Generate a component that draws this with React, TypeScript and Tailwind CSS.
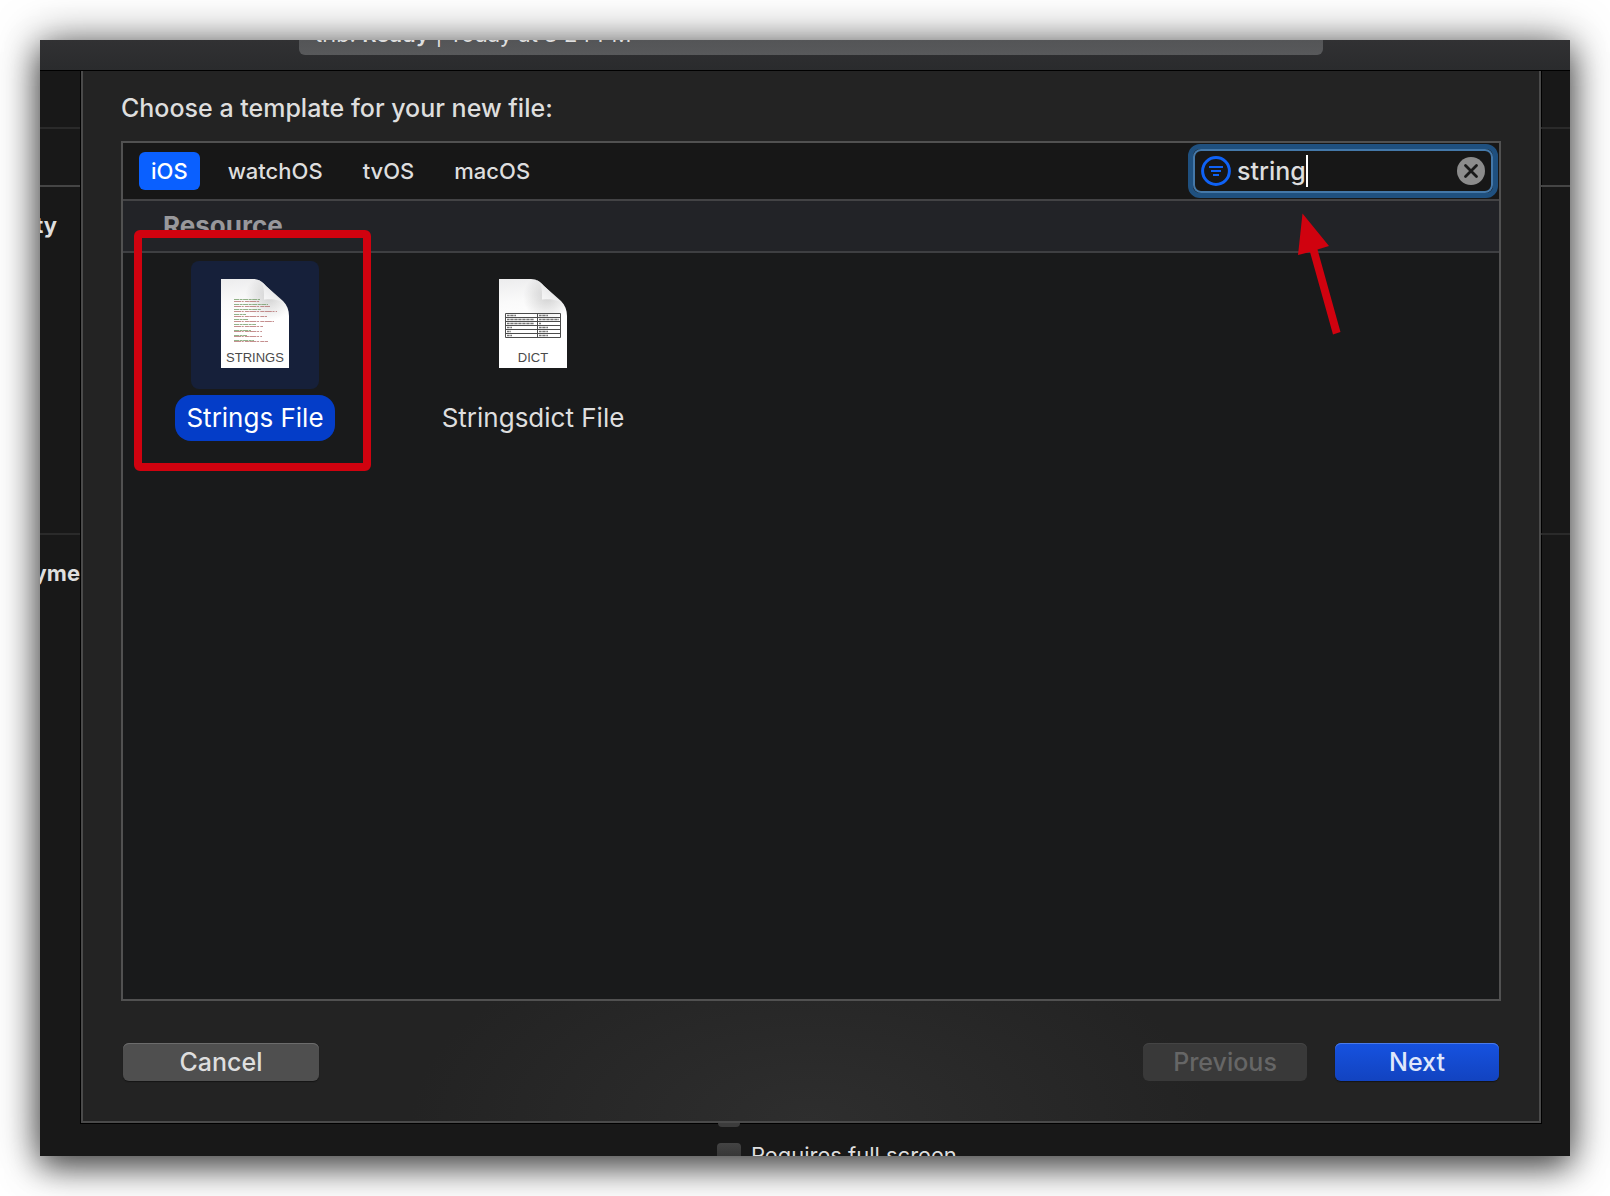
import React from "react";

const tabs = ["iOS", "watchOS", "tvOS", "macOS"];

function Page({ id, label, children }: { id: string; label: string; children: React.ReactNode }) {
  return (
    <svg width="68" height="92" viewBox="0 0 68 92" className="overflow-visible" aria-hidden="true">
      <defs>
        <linearGradient id={`${id}-paper`} x1="0.2" y1="0" x2="0.3" y2="1">
          <stop offset="0" stopColor="#ededee" />
          <stop offset="0.25" stopColor="#fafafa" />
          <stop offset="0.5" stopColor="#ffffff" />
        </linearGradient>
        <linearGradient id={`${id}-fold`} x1="0" y1="1" x2="0.6" y2="0.3">
          <stop offset="0" stopColor="#ffffff" />
          <stop offset="1" stopColor="#e6e6e7" />
        </linearGradient>
        <radialGradient id={`${id}-shade`} cx="48" cy="18" r="24" gradientUnits="userSpaceOnUse">
          <stop offset="0" stopColor="#000" stopOpacity="0.16" />
          <stop offset="1" stopColor="#000" stopOpacity="0" />
        </radialGradient>
      </defs>
      <path d="M0 0H32C38 0 41 3 45 7L62 22C66 26 68 31 68 37V89H0Z" fill={`url(#${id}-paper)`} />
      <path d="M0 0H32C38 0 41 3 45 7L62 22C66 26 68 31 68 37V89H0Z" fill={`url(#${id}-shade)`} />
      <path d="M36 0.5C42 3 43.5 8 43 20.5C52 19.5 59 20.5 65 26L45 7C42 4 40 1.5 36 0.5Z" fill={`url(#${id}-fold)`} />
      {children}
      <text x="34" y="83" textAnchor="middle" fontFamily="Liberation Sans, sans-serif" fontSize="13" fill="#4a4a4a">
        {label}
      </text>
    </svg>
  );
}

const codeLines: [number, string, number][] = [
  [20, "g", 26], [22, "r", 26], [25, "g", 34], [27, "r", 36], [30, "g", 27], [32, "r", 43],
  [35, "g", 12], [37, "r", 33], [40, "g", 14], [42, "r", 40], [45, "g", 22], [47, "r", 29],
  [51, "g", 17], [52, "r", 28], [56, "g", 13], [57, "r", 28], [61, "g", 20], [62, "r", 34],
];

function StringsIcon() {
  return (
    <Page id="strings" label="STRINGS">
      {codeLines.map(([y, tone, w], i) => (
        <path
          key={i}
          d={`M13 ${y + 0.5}h${w}`}
          stroke={tone === "g" ? "#6f9a63" : "#b26a6a"}
          strokeWidth="1"
          strokeDasharray={tone === "g" ? "5 0.6 3 0.5" : "7 0.7 2 1.2 4 0.5"}
          opacity="0.75"
        />
      ))}
    </Page>
  );
}

const dictRows = [[9, 9], [27, 20], [27, 2], [5, 9], [4, 9], [5, 9]];

function DictIcon() {
  return (
    <Page id="dict" label="DICT">
      <path
        d="M6.5 34.5H61.5V58.5H6.5ZM38.5 34.5V58.5M6.5 38.5H61.5M6.5 42.5H61.5M6.5 46.5H61.5M6.5 50.5H61.5M6.5 54.5H61.5"
        fill="none"
        stroke="#4c4c4c"
        strokeWidth="1"
      />
      {dictRows.map(([a, b], i) => (
        <path key={i} d={`M8 ${36.5 + i * 4}h${a}M40 ${36.5 + i * 4}h${b}`} stroke="#777" strokeWidth="1.4" strokeDasharray="2 0.4 1.3 0.3" />
      ))}
    </Page>
  );
}

function SideLines() {
  return (
    <>
      <div className="h-14 shrink-0" />
      <div className="h-0.5 shrink-0 bg-[#2a2a2a]" />
      <div className="h-14 shrink-0" />
      <div className="h-0.5 shrink-0 bg-[#454545]" />
    </>
  );
}

export default function App() {
  return (
    <div className="flex min-h-screen bg-white p-10 font-[Inter,sans-serif] text-[#dedede]">
      <div className="flex min-w-0 flex-1 flex-col bg-[#181818] shadow-[0_0_40px_rgba(0,0,0,0.5),0_12px_30px_rgba(0,0,0,0.55)]">
        <header className="flex h-[31px] shrink-0 justify-center overflow-hidden border-b border-black bg-linear-to-b from-[#313133] to-[#2a2b2d] pl-3">
          <div className="flex h-[15px] w-[1024px] items-end overflow-hidden rounded-b-md bg-linear-to-b from-[#545557] to-[#58595b] px-4 text-[22px] leading-[26px] text-[#dedede]">
            <p className="whitespace-nowrap pb-2">
              trib: <b className="font-semibold">Ready</b> | Today at 3:24 PM
            </p>
          </div>
        </header>

        <div className="flex min-h-0 flex-1">
          <aside className="flex w-[41px] shrink-0 flex-col overflow-hidden text-[22px] font-bold leading-7">
            <SideLines />
            <p className="mt-6 self-end pr-6">ty</p>
            <div className="h-[294px] shrink-0" />
            <div className="h-0.5 shrink-0 bg-[#2a2a2a]" />
            <p className="mt-6 self-end pr-px">yme</p>
          </aside>

          <main className="flex min-w-0 flex-1 flex-col border-2 border-t-0 border-[#4a4a4a] bg-[#232323] bg-[radial-gradient(ellipse_400px_200px_at_50%_100%,#2e2e2e,#232323)] px-[38px] pb-10 outline outline-black">
            <h1 className="mt-5 text-[25px] font-medium leading-[34px]">Choose a template for your new file:</h1>

            <section className="relative mt-4 flex flex-1 flex-col border-2 border-[#515151] bg-[#191a1b]">
              <div className="flex h-[58px] shrink-0 items-center justify-between border-b-2 border-[#434345] bg-[#171717] pl-4 pr-px">
                <nav className="flex items-center gap-4 text-[22px] font-medium leading-[38px]">
                  {tabs.map((t, i) => (
                    <button key={t} className={i === 0 ? "rounded-md bg-[#0a60ff] px-3 text-white" : "px-3"}>
                      {t}
                    </button>
                  ))}
                </nav>
                <div className="flex h-[54px] w-[310px] items-center rounded-xl border-5 border-[#1f507f] bg-[#171717]">
                  <div className="flex h-11 min-w-0 flex-1 items-center rounded-lg border-2 border-[#4478a9] px-1.5">
                    <svg width="30" height="30" viewBox="0 0 30 30" fill="none" stroke="#0f62f6" aria-hidden="true">
                      <circle cx="15" cy="15" r="13.4" strokeWidth="3" />
                      <path d="M8 11H22M10 15H20M12 19H18" strokeWidth="2" />
                    </svg>
                    <input
                      aria-label="Filter"
                      defaultValue="string"
                      className="ml-1.5 min-w-0 max-w-48 bg-transparent text-[25px] font-medium leading-8 caret-transparent outline-none field-sizing-content"
                    />
                    <span className="h-8 w-0.5 shrink-0 bg-white" />
                    <button aria-label="Clear" className="ml-auto">
                      <svg width="28" height="28" viewBox="0 0 28 28" fill="none">
                        <circle cx="14" cy="14" r="14" fill="#8c8c8c" />
                        <path d="M8.5 8.5L19.5 19.5M19.5 8.5L8.5 19.5" stroke="#191919" strokeWidth="2.8" strokeLinecap="round" />
                      </svg>
                    </button>
                  </div>
                </div>
              </div>
              <h2 className="h-[52px] shrink-0 border-b-2 border-[#3e3f42] bg-[#222327] pl-10 text-[26px] font-bold leading-[50px] text-[#98989b]">Resource</h2>

              <div className="flex gap-[98px] px-[42px] pt-2 text-[26px]">
                <button className="flex w-[180px] flex-col items-center gap-1.5">
                  <span className="flex size-32 items-center justify-center rounded-lg bg-[#16203a]"><StringsIcon /></span>
                  <span className="w-40 rounded-2xl bg-[#043dc8] leading-[46px] text-white">Strings File</span>
                </button>
                <button className="flex w-[180px] flex-col items-center gap-1.5">
                  <span className="flex size-32 items-center justify-center"><DictIcon /></span>
                  <span className="whitespace-nowrap leading-[46px]">Stringsdict File</span>
                </button>
              </div>

              <div className="pointer-events-none absolute left-[11px] top-[87px] h-[241px] w-[237px] rounded-md border-8 border-[#d0020f]" />
              <svg className="pointer-events-none absolute right-[157px] top-[70px]" width="44" height="124" viewBox="0 0 44 124" aria-hidden="true">
                <path d="M4.5 0.5L31 33L19.5 36.5L42.5 119L35 121.5L12 39L0 42Z" fill="#d0020f" />
              </svg>
            </section>

            <footer className="mt-[42px] flex px-0.5 text-[25px] font-medium leading-[38px]">
              <button className="w-[196px] rounded-md bg-[#4f4f4f] shadow-[inset_0_1px_0_#6c6c6c,0_1px_1px_#151515]">Cancel</button>
              <button disabled className="ml-auto w-[164px] rounded-md bg-[#393939] text-[#666] shadow-[inset_0_1px_0_#444]">Previous</button>
              <button className="ml-7 w-[164px] rounded-md bg-linear-to-b from-[#1652e0] to-[#1243c0] text-[#dfe7fb] shadow-[inset_0_1px_0_#4b7bea,0_1px_1px_#151515]">Next</button>
            </footer>
          </main>

          <aside className="flex w-[29px] shrink-0 flex-col">
            <SideLines />
            <div className="h-[346px] shrink-0" />
            <div className="h-0.5 shrink-0 bg-[#2a2a2a]" />
          </aside>
        </div>

        <div className="flex h-[33px] shrink-0 justify-center overflow-hidden pl-16">
          <div className="w-60">
            <div className="ml-px h-1 w-[22px] rounded-b bg-[#3c3c3c]" />
            <label className="mt-4 flex gap-2.5 whitespace-nowrap text-[22px] leading-6">
              <input type="checkbox" className="size-6 shrink-0 appearance-none rounded bg-linear-to-b from-[#444] to-[#2c2c2c]" />
              Requires full screen
            </label>
          </div>
        </div>
      </div>
    </div>
  );
}
